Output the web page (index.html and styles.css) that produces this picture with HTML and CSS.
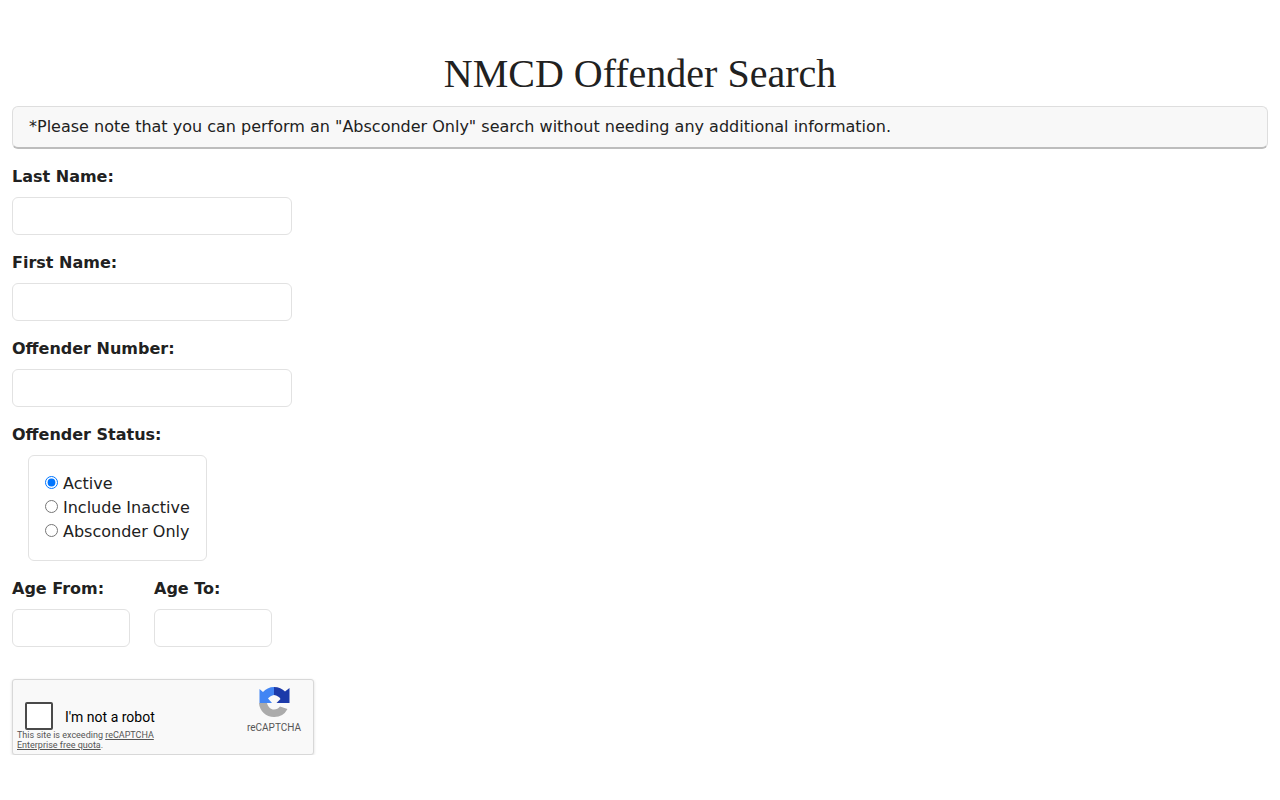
FILE: index.html
```html
<!DOCTYPE html>
<html lang="en">
<head>
  <meta charset="UTF-8">
  <title>NMCD Offender Search</title>
  <link rel="stylesheet" href="styles.css">
</head>
<body>
  <div class="container">
    <h1 class="page-title">NMCD Offender Search</h1>
    <div class="note">*Please note that you can perform an "Absconder Only" search without needing any additional information.</div>

    <form>
      <div class="field">
        <label class="field-label" for="last-name">Last Name:</label>
        <input class="text-input" id="last-name" type="text">
      </div>
      <div class="field">
        <label class="field-label" for="first-name">First Name:</label>
        <input class="text-input" id="first-name" type="text">
      </div>
      <div class="field">
        <label class="field-label" for="offender-number">Offender Number:</label>
        <input class="text-input" id="offender-number" type="text">
      </div>

      <div class="field">
        <div class="field-label">Offender Status:</div>
        <div class="status-box">
          <label class="radio-row"><input type="radio" name="status" checked><span>Active</span></label>
          <label class="radio-row"><input type="radio" name="status"><span>Include Inactive</span></label>
          <label class="radio-row"><input type="radio" name="status"><span>Absconder Only</span></label>
        </div>
      </div>

      <div class="age-row">
        <div>
          <label class="field-label" for="age-from">Age From:</label>
          <input class="text-input age-input" id="age-from" type="text">
        </div>
        <div>
          <label class="field-label" for="age-to">Age To:</label>
          <input class="text-input age-input" id="age-to" type="text">
        </div>
      </div>

      <div class="captcha">
        <div class="captcha-check"></div>
        <div class="captcha-text">I'm not a robot</div>
        <div class="captcha-brand">
          <svg class="captcha-logo" viewBox="0 0 32 32" width="32" height="32">
            <path fill="#ababab" d="M1 17 H9 C10 21 12.5 23.5 16 23.5 C18.5 23.5 20.5 22.5 22 20.5 L29.5 23 A15 15 0 0 1 16 31 C8 31 1.5 25 1 17 Z"/>
            <path fill="#4285f4" d="M16 1 C11.5 1 7.5 3 5 6 L1.5 3 V17 H14 L10 12.5 C11.5 10.5 13.5 9.5 16 9 Z"/>
            <path fill="#1c3aa9" d="M16 1 C20.5 1 24.5 3 27 5.5 L31.5 2 V17 H18.5 L22.5 13 C21.5 11 19 9.5 16 9 Z"/>
          </svg>
          <div class="captcha-name">reCAPTCHA</div>
        </div>
        <div class="captcha-quota">This site is exceeding <a href="#">reCAPTCHA Enterprise free quota</a>.</div>
      </div>
    </form>
  </div>
</body>
</html>
```

FILE: styles.css
```css
* {
  box-sizing: border-box;
}

body {
  margin: 0;
  background: #fff;
  color: #212121;
  font-family: "DejaVu Sans", sans-serif;
  font-size: 16px;
  line-height: 24px;
}

.container {
  padding: 50px 12px 0;
}

.page-title {
  margin: 0 0 8px;
  font-family: "Liberation Serif", serif;
  font-size: 40px;
  font-weight: 400;
  line-height: 48px;
  text-align: center;
}

.note {
  height: 43px;
  margin-bottom: 16px;
  padding: 8px 16px;
  background: #f8f8f8;
  border: 1px solid #dedede;
  border-bottom: 2px solid #bdbdbd;
  border-radius: 6px;
}

.field {
  margin-bottom: 16px;
}

.field-label {
  display: block;
  margin-bottom: 8px;
  font-weight: 700;
}

.text-input {
  display: block;
  width: 280px;
  height: 38px;
  padding: 6px 12px;
  background: #fff;
  border: 1px solid #e2e2e2;
  border-radius: 6px;
  font: inherit;
}

.status-box {
  width: 179px;
  margin-left: 16px;
  padding: 16px;
  border: 1px solid #e2e2e2;
  border-radius: 6px;
}

.radio-row {
  display: flex;
  align-items: center;
  white-space: nowrap;
}

.radio-row input {
  flex-shrink: 0;
  width: 13px;
  height: 13px;
  margin: 0 5px 4px 0;
}

.age-row {
  display: flex;
  gap: 24px;
  margin-bottom: 32px;
}

.age-input {
  width: 118px;
}

.captcha {
  position: relative;
  display: flex;
  align-items: center;
  width: 302px;
  height: 76px;
  padding-left: 12px;
  background: #f9f9f9;
  border: 1px solid #d8d8d8;
  border-radius: 3px;
  box-shadow: 0 1px 3px rgba(0, 0, 0, 0.15);
  font-family: Roboto, sans-serif;
}

.captcha-check {
  width: 28px;
  height: 28px;
  margin: -2px 12px 0 0;
  background: #fff;
  border: 2px solid #4a4a4a;
  border-radius: 2px;
}

.captcha-text {
  font-size: 14px;
  line-height: 16px;
  color: #000;
  margin-top: -1px;
}

.captcha-brand {
  position: absolute;
  top: 6px;
  right: 11px;
  display: flex;
  flex-direction: column;
  align-items: center;
  width: 56px;
}

.captcha-logo {
  display: block;
}

.captcha-name {
  font-size: 10px;
  line-height: 14px;
  margin-top: 3px;
  color: #555;
}

.captcha-quota {
  position: absolute;
  left: 4px;
  top: 50px;
  width: 150px;
  font-size: 9px;
  line-height: 10px;
  color: #555;
}

.captcha-quota a {
  color: #555;
}
```
